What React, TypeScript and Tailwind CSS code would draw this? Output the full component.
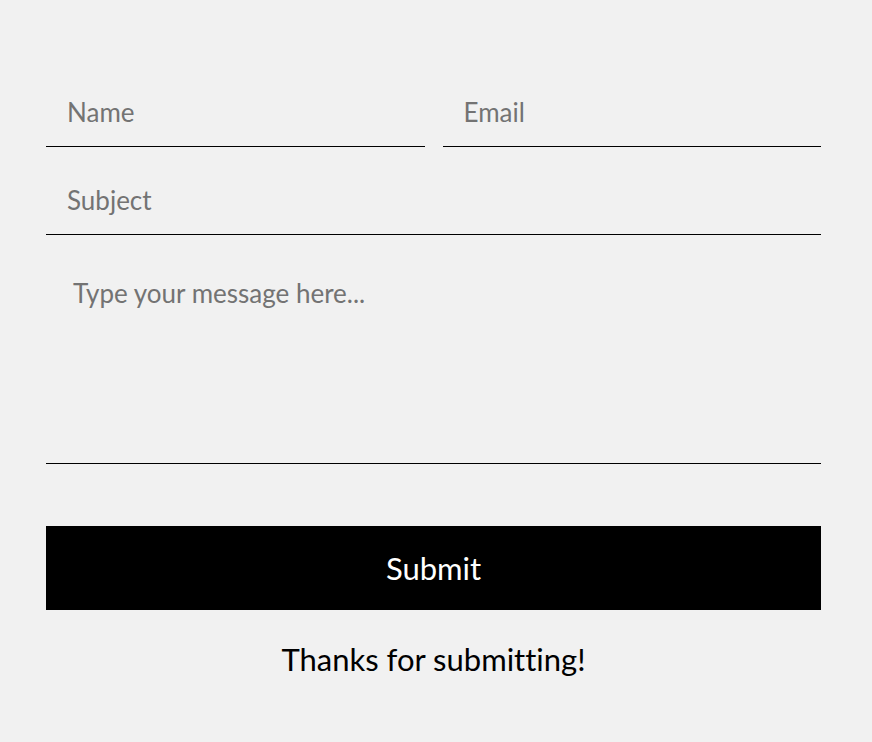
export default function App() {
  const field =
    "h-[70px] border-b border-black bg-transparent px-[21px] text-[26px] text-black outline-none placeholder:text-[#737373]";
  return (
    <div
      className="min-h-[742px] w-full bg-[#f1f1f1] pt-[77px] [font-variant-ligatures:none]"
      style={{ fontFamily: "Lato, 'Open Sans', sans-serif" }}
    >
      <form className="mx-[46px] w-[775px] flex flex-col gap-[18px]">
        <div className="grid grid-cols-2 gap-[18px]">
          <input placeholder="Name" className={field} />
          <input placeholder="Email" className={field} />
        </div>
        <input placeholder="Subject" className={field} />
        <textarea
          placeholder="Type your message here..."
          className="h-[211px] resize-none border-b border-black bg-transparent px-[27px] pt-[24px] text-[26px] leading-[32px] text-black outline-none placeholder:text-[#737373]"
        />
        <button type="button" className="mt-[44px] h-[84px] bg-black text-[31px] text-white">
          Submit
        </button>
        <p className="mt-[8px] text-center text-[31px] text-black">Thanks for submitting!</p>
      </form>
    </div>
  );
}
